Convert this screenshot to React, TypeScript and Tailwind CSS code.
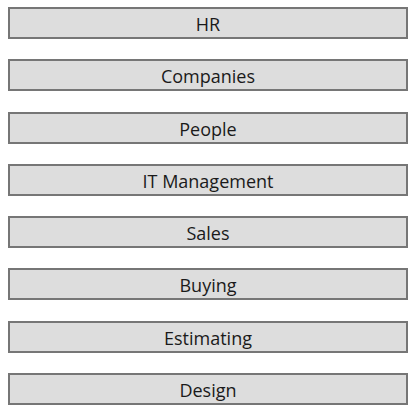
const sections = [
  "HR",
  "Companies",
  "People",
  "IT Management",
  "Sales",
  "Buying",
  "Estimating",
  "Design",
];

export default function App() {
  return (
    <div className="w-[420px] h-[416px] bg-white pt-[7px] pl-2">
      <div className="flex flex-col gap-[20.3px]">
        {sections.map((name) => (
          <button
            key={name}
            className="w-[400px] h-[32px] bg-[#dddddd] border-2 border-[#767676] flex items-center justify-center pt-[2px] text-[18px] text-[#1a1a1a] leading-none"
            style={{ fontFamily: '"Open Sans", "Noto Sans", sans-serif' }}
          >
            {name}
          </button>
        ))}
      </div>
    </div>
  );
}
